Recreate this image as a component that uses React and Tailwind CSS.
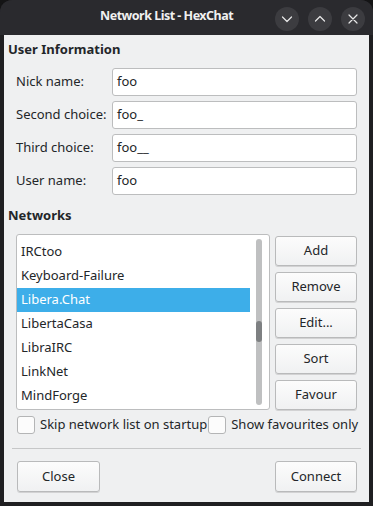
import React from "react";

const font = { fontFamily: '"Noto Sans", "Open Sans", sans-serif' };

const fields = [
  { label: "Nick name:", value: "foo" },
  { label: "Second choice:", value: "foo_" },
  { label: "Third choice:", value: "foo__" },
  { label: "User name:", value: "foo" },
];

const networks = [
  "IRCtoo",
  "Keyboard-Failure",
  "Libera.Chat",
  "LibertaCasa",
  "LibraIRC",
  "LinkNet",
  "MindForge",
];

function TitleButton({ children }) {
  return (
    <div className="w-[24px] h-[24px] rounded-full bg-[#3c3c40] flex items-center justify-center">
      <svg width="14" height="14" viewBox="0 0 14 14" fill="none" stroke="#e8e8e8" strokeWidth="1.2" strokeLinecap="round" strokeLinejoin="round">
        {children}
      </svg>
    </div>
  );
}

function Button({ children, className = "" }) {
  return (
    <button className={"flex items-center justify-center rounded-[3px] border border-[#b9babb] bg-gradient-to-b from-[#fcfcfc] to-[#f0f1f2] text-[13px] text-[#232629] shadow-[0_1px_0_rgba(0,0,0,0.12)] " + className}>
      {children}
    </button>
  );
}

function Checkbox({ label }) {
  return (
    <label className="flex items-center gap-[5px]">
      <span className="w-[18px] h-[18px] rounded-[3px] border border-[#b4b5b6] bg-[#fcfcfc]"></span>
      <span className="text-[13px] text-[#232629]">{label}</span>
    </label>
  );
}

export default function App() {
  return (
    <div className="w-[373px] h-[506px] bg-[#141415] overflow-hidden" style={font}>
      <div className="w-full h-full flex flex-col rounded-t-[12px] bg-[#1f1f21]">
        {/* Title bar */}
        <div className="h-[35px] shrink-0 rounded-t-[12px] bg-[#2a2a2e] flex items-center">
          <div className="ml-[100px] mb-[2px] text-[12.5px] font-bold tracking-[-0.5px] text-[#f0f0f0]">Network List - HexChat</div>
          <div className="ml-auto mr-[8px] mt-[2px] flex gap-[9px]">
            <TitleButton>
              <path d="M2.5 5 L7 9.5 L11.5 5" />
            </TitleButton>
            <TitleButton>
              <path d="M2.5 9 L7 4.5 L11.5 9" />
            </TitleButton>
            <TitleButton>
              <path d="M3 3 L11 11 M11 3 L3 11" />
            </TitleButton>
          </div>
        </div>

        {/* Body */}
        <div className="flex-1 mx-[4px] mb-[4px] bg-[#eff0f1] px-[4px] pt-[5px] text-[#232629] flex flex-col">
          <div className="h-[18px] leading-[18px] text-[13px] font-bold">User Information</div>

          <div className="mt-[10px] ml-[8px] mr-[8px] grid grid-cols-[96px_1fr] gap-y-[5px]">
            {fields.map((f) => (
              <React.Fragment key={f.label}>
                <div className="h-[28px] flex items-center text-[13px]">{f.label}</div>
                <div className="h-[28px] rounded-[3px] border border-[#bcbdbe] bg-white flex items-center px-[4px] text-[13px]">
                  {f.value}
                </div>
              </React.Fragment>
            ))}
          </div>

          <div className="mt-[11px] h-[18px] leading-[18px] text-[13px] font-bold">Networks</div>

          <div className="mt-[10px] ml-[8px] mr-[8px] flex gap-[5px]">
            <div className="w-[254px] h-[176px] rounded-[3px] border border-[#bcbdbe] bg-white flex overflow-hidden">
              <div className="flex-1 pt-[5px]">
                {networks.map((n) => (
                  <div
                    key={n}
                    className={
                      "h-[24px] flex items-center pl-[4px] text-[13px] " +
                      (n === "Libera.Chat" ? "bg-[#3daee9] text-white" : "")
                    }
                  >
                    {n}
                  </div>
                ))}
              </div>
              <div className="w-[19px] flex justify-center pt-[4px] pb-[4px] pr-[1px]">
                <div className="w-[6px] h-full rounded-full bg-[#bfc0c1] flex flex-col">
                  <div className="h-[82px]"></div>
                  <div className="h-[21px] rounded-full bg-[#7e8082]"></div>
                </div>
              </div>
            </div>
            <div className="flex-1 flex flex-col gap-[6px] pt-[2px]">
              {["Add", "Remove", "Edit...", "Sort", "Favour"].map((b) => (
                <Button key={b} className="h-[30px] w-full">{b}</Button>
              ))}
            </div>
          </div>

          <div className="mt-[5px] ml-[9px] flex items-center gap-[1px] h-[20px]">
            <Checkbox label="Skip network list on startup" />
            <Checkbox label="Show favourites only" />
          </div>

          <div className="mt-[13px] h-px bg-[#c6c7c8] mx-[4px]"></div>

          <div className="mt-[12px] ml-[9px] mr-[8px] flex justify-between">
            <Button className="w-[83px] h-[31px]">Close</Button>
            <Button className="w-[82px] h-[31px]">Connect</Button>
          </div>
        </div>
      </div>
    </div>
  );
}
